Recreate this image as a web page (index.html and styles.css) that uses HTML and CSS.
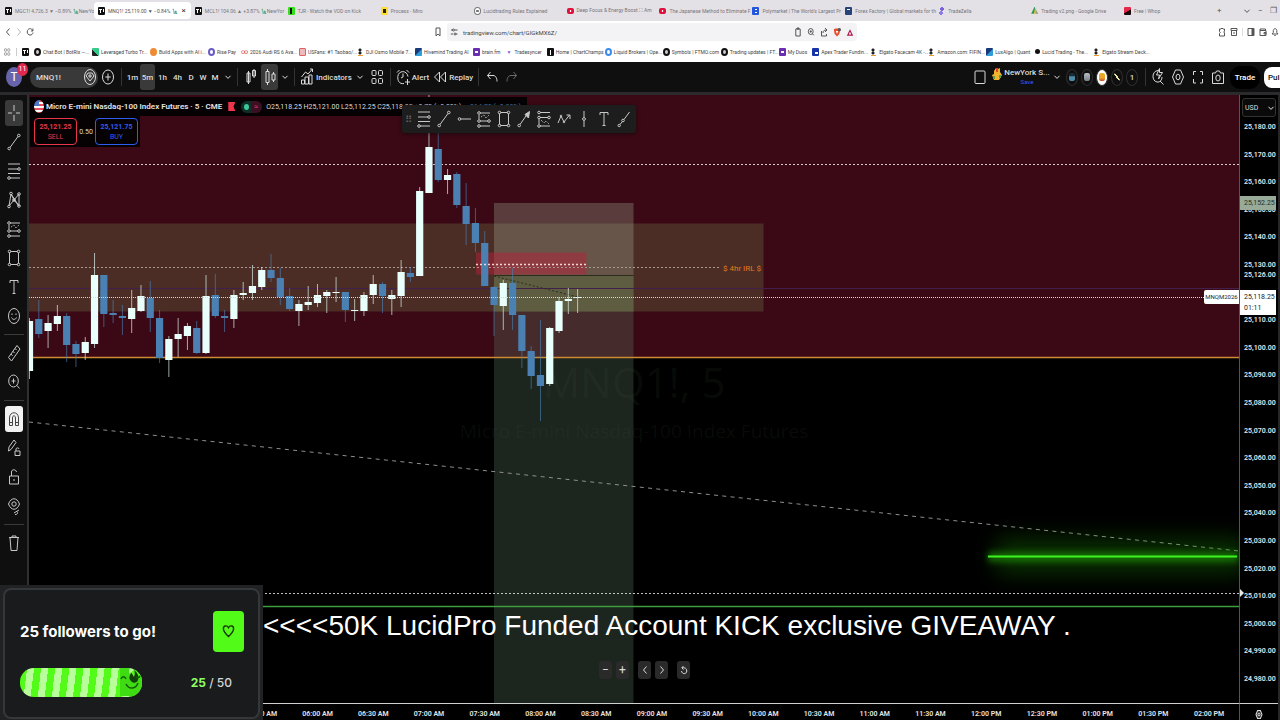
FILE: index.html
```html
<!DOCTYPE html>
<html lang="en">
<head>
    <meta charset="UTF-8">
    <meta name="viewport" content="width=device-width, initial-scale=1.0">
    <title>MNQ1! 25,119.00 ▼ −0.84% NewYork</title>
    <link rel="stylesheet" href="styles.css">
</head>
<body>
    <!-- icon set -->
    <svg class="sprite" aria-hidden="true">
        <symbol id="i-chevron" viewBox="0 0 8 8"><path d="M1.5 2.8 4 5.4 6.5 2.8"/></symbol>
        <symbol id="i-cross" viewBox="0 0 14 20"><path d="M7 2v6M7 12v6M1 10h4M9 10h4"/></symbol>
        <symbol id="i-line" viewBox="0 0 14 20"><path d="m3 15.500 8-11"/><circle cx="2.200" cy="16.500" r="1.300"/><circle cx="11.800" cy="3.500" r="1.300"/></symbol>
        <symbol id="i-fib" viewBox="0 0 14 20"><path d="M1 3h12M1 8h10M1 12.500h12M3 17h10"/><circle cx="12" cy="8" r="1.300"/><circle cx="2" cy="17" r="1.300"/></symbol>
        <symbol id="i-pattern" viewBox="0 0 14 20"><path d="M2 16 4 4l3 6 5-6M2 16l5-6 5 6L4 4M12 16V5"/><circle cx="2" cy="16.500" r="1.300"/><circle cx="4" cy="3.500" r="1.300"/><circle cx="12" cy="4" r="1.300"/><circle cx="12" cy="16" r="1.300"/><circle cx="7" cy="10" r="1.300"/></symbol>
        <symbol id="i-position" viewBox="0 0 14 20"><path d="M3 4h10M3 12h8M3 17h10M2 6v4" /><path d="m4 8 3-2 2 3 3-3" stroke-dasharray="1 1"/><circle cx="2" cy="4" r="1.300"/><circle cx="2" cy="12" r="1.300"/><circle cx="12" cy="12" r="1.300"/><circle cx="2" cy="17" r="1.300"/></symbol>
        <symbol id="i-short" viewBox="0 0 14 20"><path d="M3 3.500h10M3 8.500h8M3 17h10M2 10v5"/><path d="m4 11 3 3 2-2 3 3" stroke-dasharray="1 1"/><circle cx="2" cy="3.500" r="1.300"/><circle cx="2" cy="8.500" r="1.300"/><circle cx="12" cy="8.500" r="1.300"/><circle cx="2" cy="17" r="1.300"/></symbol>
        <symbol id="i-rect" viewBox="0 0 14 20"><path d="M2.500 4.500v11M11.500 4.500v11M3.500 3.500h7M3.500 16.500h7"/><circle cx="2.500" cy="3.500" r="1.300"/><circle cx="11.500" cy="3.500" r="1.300"/><circle cx="2.500" cy="16.500" r="1.300"/><circle cx="11.500" cy="16.500" r="1.300"/></symbol>
        <symbol id="i-text" viewBox="0 0 14 20"><path d="M3 6V3.500h8V6M7 3.500v13M5.500 16.500h3"/></symbol>
        <symbol id="i-smile" viewBox="0 0 14 20"><ellipse cx="7" cy="10" rx="5.500" ry="7.500"/><path d="M4.500 11.500c1 2.500 4 2.500 5 0M5 7.500v1.500M9 7.500v1.500"/></symbol>
        <symbol id="i-ruler" viewBox="0 0 14 20"><path d="M1.500 14.500 10 2.500l3 3.500-8.500 12zM4 11l1.500 1.700M6 8.300 7.500 10M8 5.500 9.500 7"/></symbol>
        <symbol id="i-zoomin" viewBox="0 0 14 20"><ellipse cx="6.500" cy="9" rx="4.800" ry="6"/><path d="m10 13.500 2.500 3M6.500 6.500v5M4.500 9h4"/></symbol>
        <symbol id="i-magnet" viewBox="0 0 14 20"><path d="M2.500 16.500V9c0-7 9-7 9 0v7.500h-3V9c0-3-3-3-3 0v7.500zM2.500 13.500h3M8.500 13.500h3"/></symbol>
        <symbol id="i-pencil" viewBox="0 0 14 20"><path d="m1.500 13 .5-4 5-7 2 2.500-5 7zM8 13h5v4.500H8zM9 13v-2c0-1.500 3-1.500 3 0"/></symbol>
        <symbol id="i-lock" viewBox="0 0 14 20"><path d="M2.500 9h9v8h-9zM4.500 9V5c0-3 4.500-3 5 0M7 12v2"/></symbol>
        <symbol id="i-hide" viewBox="0 0 14 20"><path d="M1.500 8c2.500-7 8.500-7 11 0-2.500 7-8.500 7-11 0z"/><circle cx="7" cy="8" r="2.200"/><path d="m7 17 5-3M8 18.500c3 0 3-2 2-3"/></symbol>
        <symbol id="i-trash" viewBox="0 0 14 20"><path d="M2 4.500h10M5 4.500V3h4v1.500M3 4.500l1 13h6l1-13"/></symbol>
        <symbol id="i-hline" viewBox="0 0 14 20"><path d="M4 10h10"/><circle cx="2.500" cy="10" r="1.300"/></symbol>
        <symbol id="i-arrow" viewBox="0 0 14 20"><path d="m3 15.500 7-10"/><path d="m12.500 2.500-4.500 3 3.500 3.500z" fill="currentColor"/><circle cx="2.200" cy="16.500" r="1.300"/></symbol>
        <symbol id="i-path" viewBox="0 0 14 20"><path d="m1 14 3-7 3 6 5.500-7M9.500 6h3.500v4"/><circle cx="4" cy="7" r=".8"/><circle cx="7" cy="13" r=".8"/></symbol>
        <symbol id="i-vline" viewBox="0 0 14 20"><path d="M7 2v6.500M7 11.500V18"/><circle cx="7" cy="10" r="1.400"/></symbol>
        <symbol id="i-ray" viewBox="0 0 14 20"><path d="m3 15.500 2-2.500M7 10.500 12.500 3"/><circle cx="2.200" cy="16.500" r="1.200"/><circle cx="6" cy="11.500" r="1.300"/></symbol>
        <symbol id="i-plus-circle" viewBox="0 0 14 20"><ellipse cx="7" cy="10" rx="5.500" ry="7"/><path d="M7 6.500v7M4.300 10h5.400"/></symbol>
        <symbol id="i-gem" viewBox="0 0 14 20"><ellipse cx="7" cy="10" rx="5.500" ry="7.500"/><path d="m3 9 2-3h4l2 3-4 5zM7 7v4M5 9h4"/></symbol>
        <symbol id="i-bars" viewBox="0 0 14 20"><path d="M4.500 4v13M3 6h3v9h-3zM10 2v9M8.500 3.500h3v5.500h-3z"/></symbol>
        <symbol id="i-candles" viewBox="0 0 14 20"><path d="M4.500 2v2.500M4.500 15.500V18M3 4.500h3v11H3zM10.500 5v2M10.500 13v2M9 7h3v6H9z"/></symbol>
        <symbol id="i-indicators" viewBox="0 0 14 20"><path d="M1.500 17v-4h3v4zM5 17v-7h3.500v7zM9 17V8h3v9zM1.500 10l4-5 2.500 2 4.500-5M10 2h2.500v3"/></symbol>
        <symbol id="i-grid" viewBox="0 0 14 20"><rect x="2" y="3.500" width="4" height="5" rx="1"/><rect x="8.500" y="3.500" width="4" height="5" rx="1"/><rect x="2" y="11.500" width="4" height="5" rx="1"/><rect x="8.500" y="11.500" width="4" height="5" rx="1"/></symbol>
        <symbol id="i-alarm" viewBox="0 0 14 20"><path d="M8 16.500C3 17.500 1.500 13 1.800 9.500 2.500 3 11 3 12 9.500M7 6.500V10l-2 1M1 5.500 3.500 3M10.500 3 13 5.500M11.500 12v6M9 15h5"/></symbol>
        <symbol id="i-replay" viewBox="0 0 14 20"><path d="m6.500 5-5 5 5 5zM12.500 5l-5 5 5 5z"/></symbol>
        <symbol id="i-undo" viewBox="0 0 14 20"><path d="M5.500 5 2.500 8.500l3 3.500M2.500 8.500H8c3 0 4 3 4 6"/></symbol>
        <symbol id="i-redo" viewBox="0 0 14 20"><path d="m8.500 5 3 3.500-3 3.500M11.500 8.500H6c-3 0-4 3-4 6"/></symbol>
        <symbol id="i-square" viewBox="0 0 14 20"><rect x="2" y="4" width="10" height="12.500" rx="1"/></symbol>
        <symbol id="i-quick" viewBox="0 0 14 20"><path d="M7 3.500C.5 4 .5 14 6 15c3 .5 5-2 5-5M9 14l3.500 3.500M8.500 1.500l-3 6.500h3L7.500 12l4-6.500h-3z"/></symbol>
        <symbol id="i-hex" viewBox="0 0 14 20"><path d="m4.500 3h5l3 7-3 7h-5l-3-7z"/><ellipse cx="7" cy="10" rx="2" ry="2.800"/></symbol>
        <symbol id="i-full" viewBox="0 0 14 20"><path d="M2.500 8V4.500H5M9 4.500h2.500V8M11.500 12v4H9M5 16H2.500v-4"/></symbol>
        <symbol id="i-camera" viewBox="0 0 14 20"><path d="M1.500 6h3L5.500 4h3l1 2h3v10.500h-11z"/><ellipse cx="7" cy="11" rx="2.200" ry="3"/></symbol>
        <symbol id="i-heart" viewBox="0 0 14 16"><path d="M7 14C3 10 1.500 8 1.500 5.500 1.500 2 5.500 1.500 7 4.500 8.500 1.500 12.500 2 12.500 5.500 12.500 8 11 10 7 14z"/></symbol>
        <symbol id="i-back" viewBox="0 0 8 10"><path d="M5.500 1.500 2.500 5l3 3.500"/></symbol>
        <symbol id="i-forward" viewBox="0 0 8 10"><path d="m2.500 1.500 3 3.500-3 3.500"/></symbol>
        <symbol id="i-reload" viewBox="0 0 8 10"><path d="M7 5.500C6.500 9 1.500 9 1.200 5 1.500 1 5.500.5 6.800 4M6.900 1.500V4H5"/></symbol>
        <symbol id="i-reset" viewBox="0 0 8 10"><path d="M1.500 6c.5 3.500 5 3.500 5.300 0C6.800 3 4.500 2.500 2 2.800M3.500 1 1.800 2.800l1.700 1.800"/></symbol>
        <symbol id="i-bookmark" viewBox="0 0 8 10"><path d="M2 1h4v8L4 7 2 9z"/></symbol>
        <symbol id="i-site" viewBox="0 0 8 10"><path d="M1 3h2M5 3h2.500M.8 7H3M6 7h1.500"/><circle cx="3.500" cy="3" r="1"/><circle cx="5" cy="7" r="1"/></symbol>
        <symbol id="i-clip" viewBox="0 0 8 10"><path d="M1.800 2h4.400v7H1.800zM3 1h2v1H3z"/></symbol>
        <symbol id="i-share" viewBox="0 0 8 10"><path d="M1.500 4v5h5V7M3 6c0-2 1-3 3.500-3M5 1l2 2-2 2"/></symbol>
        <symbol id="i-panel" viewBox="0 0 8 10"><path d="M1 1.500h6v7H1z"/><path d="M5 2h1.500v6H5z" fill="currentColor"/></symbol>
        <symbol id="i-archive" viewBox="0 0 8 10"><path d="M1 1.500h6v2H1zM1.500 3.500v5h5v-5M4 5v2"/></symbol>
        <symbol id="i-wallet" viewBox="0 0 8 10"><path d="M1 2h5.500v1.500M1 2v6.500h6v-5H1M5 5.500h2v1.500H5z"/></symbol>
        <symbol id="i-puzzle" viewBox="0 0 8 10"><path d="M1.500 2h1.500l1-1 1 1h1.500v2L5.800 5l.7 1v3h-5V6.500l.8-1-.8-1z"/></symbol>
        <symbol id="i-bell" viewBox="0 0 8 10"><path d="M1 7h6L5.800 5.500V3.500c-.5-2.500-3-2.500-3.500 0v2zM3.300 8.500h1.400"/></symbol>
    </svg>

    <header class="browser">
        <nav class="tabs" aria-label="Tabs">
            <a class="tab" href="#"><i class="fav fav-tv"></i><span>MGC1! 4,726.3 ▼ −0.89% 🗽NewYo</span></a>
            <a class="tab active" href="#"><i class="fav fav-tv"></i><span>MNQ1! 25,119.00 ▼ −0.84% 🗽</span><b>×</b></a>
            <a class="tab" href="#"><i class="fav fav-tv"></i><span>MCL1! 104.06 ▲ +3.87% 🗽NewYor</span></a>
            <a class="tab" href="#"><i class="fav fav-kick"></i><span>TJR - Watch the VOD on Kick</span></a>
            <a class="tab" href="#"><i class="fav fav-miro"></i><span>Process - Miro</span></a>
            <a class="tab" href="#"><i class="fav fav-ring"></i><span>Lucidtrading Rules Explained</span></a>
            <a class="tab" href="#"><i class="fav fav-yt"></i><span>Deep Focus &amp; Energy Boost ⛶ Am</span></a>
            <a class="tab" href="#"><i class="fav fav-yt"></i><span>The Japanese Method to Eliminate F</span></a>
            <a class="tab" href="#"><i class="fav fav-blue"></i><span>Polymarket | The World's Largest Pr</span></a>
            <a class="tab" href="#"><i class="fav fav-navy"></i><span>Forex Factory | Global markets for th</span></a>
            <a class="tab" href="#"><i class="fav fav-zella"></i><span>TradeZella</span></a>
            <a class="tab" href="#"><i class="fav fav-drive"></i><span>Trading v2.png - Google Drive</span></a>
            <a class="tab" href="#"><i class="fav fav-whop"></i><span>Free | Whop</span></a>
            <div class="window-controls"><span class="new-tab">+</span><svg class="ico-s"><use href="#i-chevron"/></svg><span>−</span><span>❐</span></div>
        </nav>

        <div class="url-row">
            <div class="nav-icons">
                <svg class="ico-s"><use href="#i-back"/></svg>
                <svg class="ico-s dim"><use href="#i-forward"/></svg>
                <svg class="ico-s"><use href="#i-reload"/></svg>
            </div>
            <svg class="ico-s"><use href="#i-bookmark"/></svg>
            <div class="url-box">
                <svg class="ico-s"><use href="#i-site"/></svg>
                <input type="text" aria-label="Address" value="tradingview.com/chart/GIGkMX6Z/">
                <svg class="ico-s"><use href="#i-clip"/></svg>
                <svg class="ico-s zoom"><use href="#i-zoomin"/></svg>
                <svg class="ico-s"><use href="#i-share"/></svg>
                <svg class="shield" viewBox="0 0 10 12"><path d="M1 2 3 1h4l2 1-1 6-3 3-3-3z" fill="#e8502b"/><path d="M3.500 4h3L5 8z" fill="#fff"/><circle cx="8" cy="2.500" r="2" fill="#555"/></svg>
                <svg class="shield" viewBox="0 0 10 12"><path d="M5 2 9 10H1z" fill="#b11652"/><path d="M5 5 6.500 8.500h-3z" fill="#fff"/></svg>
            </div>
            <div class="ext-icons">
                <svg class="ico-s"><use href="#i-puzzle"/></svg>
                <svg class="ico-s"><use href="#i-archive"/></svg>
                <i></i>
                <svg class="ico-s"><use href="#i-panel"/></svg>
                <svg class="ico-s"><use href="#i-wallet"/></svg>
                <svg class="ico-s"><use href="#i-bell"/></svg>
            </div>
        </div>

        <nav class="bookmarks" aria-label="Bookmarks">
            <svg class="ico-s"><use href="#i-grid"/></svg>
            <i class="sep"></i>
            <a href="#" aria-label="TradingView"><i class="fav fav-tv"></i></a>
            <a class="long" href="#"><i class="fav fav-dark"></i>Chat Bot | BotRix —...</a>
            <a class="long" href="#"><i class="fav fav-green"></i>Leveraged Turbo Tr...</a>
            <a class="long" href="#"><i class="fav fav-orange"></i>Build Apps with AI i...</a>
            <a href="#"><i class="fav fav-violet"></i>Rise Pay</a>
            <a class="long" href="#"><i class="fav fav-audi">∞</i>2026 Audi RS 6 Ava...</a>
            <a class="long" href="#"><i class="fav fav-us"></i>USFans: #1 Taobao/...</a>
            <a class="long" href="#"><i class="fav fav-amz"></i>DJI Osmo Mobile 7...</a>
            <a class="long" href="#"><i class="fav fav-hive"></i>Hivemind Trading AI</a>
            <a href="#"><i class="fav fav-purple"></i>brain.fm</a>
            <a href="#"><i class="fav fav-sync">▼</i>Tradesyncer</a>
            <a class="long" href="#"><i class="fav fav-black"></i>Home | ChartChamps</a>
            <a class="long" href="#"><i class="fav fav-drop"></i>Liquid Brokers | Ope...</a>
            <a class="long" href="#"><i class="fav fav-ftmo"></i>Symbols | FTMO.com</a>
            <a class="long" href="#"><i class="fav fav-ftmo"></i>Trading updates | FT...</a>
            <a href="#"><i class="fav fav-purple"></i>My Duos</a>
            <a class="long" href="#"><i class="fav fav-apex"></i>Apex Trader Fundin...</a>
            <a class="long" href="#"><i class="fav fav-amz"></i>Elgato Facecam 4K -...</a>
            <a class="long" href="#"><i class="fav fav-amz"></i>Amazon.com: FIFIN...</a>
            <a href="#"><i class="fav fav-hive"></i>LuxAlgo | Quant</a>
            <a class="long" href="#"><i class="fav fav-dot"></i>Lucid Trading - The...</a>
            <a class="long" href="#"><i class="fav fav-amz"></i>Elgato Stream Deck...</a>
        </nav>
    </header>

    <div class="toolbar">
        <div class="avatar">T<span class="badge">11</span></div>
        <button class="symbol">MNQ1!<svg class="ico"><use href="#i-gem"/></svg></button>
        <button class="icon-btn wide" aria-label="Compare"><svg class="ico"><use href="#i-plus-circle"/></svg></button>
        <i class="divider"></i>
        <button class="interval">1m</button>
        <button class="interval active">5m</button>
        <button class="interval">1h</button>
        <button class="interval">4h</button>
        <button class="interval day">D</button>
        <button class="interval day">W</button>
        <button class="interval day">M</button>
        <button class="more" aria-label="More intervals"><svg class="ico-s"><use href="#i-chevron"/></svg></button>
        <i class="divider"></i>
        <button class="icon-btn wide" aria-label="Bar style"><svg class="ico"><use href="#i-bars"/></svg></button>
        <button class="icon-btn active" aria-label="Candles"><svg class="ico"><use href="#i-candles"/></svg></button>
        <button class="more" aria-label="Chart styles"><svg class="ico-s"><use href="#i-chevron"/></svg></button>
        <i class="divider"></i>
        <button class="label-btn"><svg class="ico"><use href="#i-indicators"/></svg>Indicators</button>
        <button class="more" aria-label="Favourites"><svg class="ico-s"><use href="#i-chevron"/></svg></button>
        <button class="icon-btn wide" aria-label="Templates"><svg class="ico"><use href="#i-grid"/></svg></button>
        <i class="divider"></i>
        <button class="label-btn"><svg class="ico"><use href="#i-alarm"/></svg>Alert</button>
        <button class="label-btn"><svg class="ico"><use href="#i-replay"/></svg>Replay</button>
        <i class="divider"></i>
        <button class="icon-btn wide" aria-label="Undo"><svg class="ico"><use href="#i-undo"/></svg></button>
        <button class="icon-btn wide dim" aria-label="Redo"><svg class="ico"><use href="#i-redo"/></svg></button>

        <div class="toolbar-right">
            <button class="icon-btn" aria-label="Layout"><svg class="ico"><use href="#i-square"/></svg></button>
            <svg class="liberty" viewBox="0 0 10 14"><path d="M2 4 4 1l2 1 2-1v4l2 3-3 5H2L0 8l2-1z" fill="#f2b32c"/><path d="M4 1h2v4H4z" fill="#e2452e"/><path d="M1 9h2v3H1zM7 8h2v3H7z" fill="#5b9e49"/></svg>
            <button class="layout-name">NewYork S...<span>Save</span></button>
            <button class="more" aria-label="Layouts"><svg class="ico-s"><use href="#i-chevron"/></svg></button>
            <button class="chip" aria-label="Layout 1"><i class="c-teal"></i></button>
            <button class="chip" aria-label="Layout 2"><i class="c-gray"></i></button>
            <button class="chip white" aria-label="Layout 3"><i class="c-gold"></i></button>
            <button class="chip" aria-label="Layout 4"><i class="c-bone"></i></button>
            <button class="chip">1</button>
            <i class="divider wide"></i>
            <button class="icon-btn wide" aria-label="Quick search"><svg class="ico"><use href="#i-quick"/></svg></button>
            <button class="icon-btn wide" aria-label="Settings"><svg class="ico"><use href="#i-hex"/></svg></button>
            <button class="icon-btn wide" aria-label="Fullscreen"><svg class="ico"><use href="#i-full"/></svg></button>
            <button class="icon-btn wide" aria-label="Snapshot"><svg class="ico"><use href="#i-camera"/></svg></button>
            <button class="trade">Trade</button>
            <button class="publish">Pul</button>
        </div>
    </div>

    <main class="workspace">
        <aside class="sidebar">
            <button class="active" aria-label="Cross"><svg class="ico"><use href="#i-cross"/></svg></button>
            <button aria-label="Trend line"><svg class="ico"><use href="#i-line"/></svg></button>
            <button aria-label="Fib retracement"><svg class="ico"><use href="#i-fib"/></svg></button>
            <button aria-label="Patterns"><svg class="ico"><use href="#i-pattern"/></svg></button>
            <button aria-label="Position"><svg class="ico"><use href="#i-position"/></svg></button>
            <button aria-label="Rectangle"><svg class="ico"><use href="#i-rect"/></svg></button>
            <button aria-label="Text"><svg class="ico"><use href="#i-text"/></svg></button>
            <button aria-label="Emoji"><svg class="ico"><use href="#i-smile"/></svg></button>
            <hr>
            <button aria-label="Measure"><svg class="ico"><use href="#i-ruler"/></svg></button>
            <button aria-label="Zoom in"><svg class="ico"><use href="#i-zoomin"/></svg></button>
            <hr>
            <button class="on" aria-label="Magnet"><svg class="ico"><use href="#i-magnet"/></svg></button>
            <button aria-label="Stay in drawing mode"><svg class="ico"><use href="#i-pencil"/></svg></button>
            <button aria-label="Lock"><svg class="ico"><use href="#i-lock"/></svg></button>
            <button aria-label="Hide"><svg class="ico"><use href="#i-hide"/></svg></button>
            <hr>
            <button aria-label="Remove"><svg class="ico"><use href="#i-trash"/></svg></button>
        </aside>

        <div class="chart-grid">
            <section class="chart">
                <svg class="plot" viewBox="29 95 1210 608" preserveAspectRatio="xMinYMin slice">
                    <rect x="29" y="95" width="1210" height="263" fill="#3b0915"/>
                    <rect x="29" y="223.500" width="734.500" height="88" fill="#4c2d26"/>
                    <!-- position tool -->
                    <rect x="494" y="203" width="139.500" height="73" fill="rgba(162,179,152,.3)"/>
                    <rect x="494" y="276" width="139.500" height="427" fill="rgba(93,123,100,.3)"/>
                    <rect x="494" y="276" width="139.500" height="35.500" fill="#5e5c41"/>
                    <rect x="476" y="252.500" width="110.500" height="22" fill="rgba(190,30,60,.45)"/>
                    <text class="watermark" x="634" y="398" font-size="42">MNQ1!, 5</text>
                    <text class="watermark" x="634" y="438" font-size="19">Micro E-mini Nasdaq-100 Index Futures</text>

                    <g fill="none">
                        <path d="M29 164.500H1239" stroke="#d8c9cd" stroke-dasharray="2 2"/>
                        <path d="M29 267.500H720" stroke="#a89995" stroke-dasharray="2 2"/>
                        <path d="M29 288.500H1239" stroke="#41204c"/>
                        <path d="M29 357.500H1239" stroke="#cd8b35" stroke-width="1.500"/>
                        <path d="M494 275.500H633.500" stroke="#2b2c1c"/>
                        <path d="m494 276 84 21" stroke="#26301c" stroke-dasharray="2 2"/>
                        <path d="m29 422 1210 129" stroke="#8f8f8f" stroke-dasharray="4 4.300"/>
                        <path d="M29 593.500H1239" stroke="#c4c4c4" stroke-dasharray="2 2"/>
                        <path d="M29 606.500H1239" stroke="#3f9c3f" stroke-width="1.300"/>
                    </g>
                    <!-- glowing level -->
                    <rect class="glow-wide" x="996" y="538" width="250" height="36" fill="#1f9a08" opacity=".3"/>
                    <rect class="glow" x="988" y="552" width="250" height="10" fill="#1f9a08" opacity=".6"/>
                    <path d="M988 556.500H1237" stroke="#3df51e" stroke-width="2"/>
                    <g id="candles"></g>
                    <path d="M476 264.500H587" stroke="#f0d5d5" stroke-width="1.300" stroke-dasharray="2 2"/>
                    <path d="M29 297.500H1204" stroke="#e3d6d0" stroke-dasharray="1 1"/>
                    <text x="723" y="271" font-size="8" fill="#e57a1d">$ 4hr IRL $</text>
                </svg>

                <div class="legend">
                    <i class="flag"></i>
                    <h1>Micro E-mini Nasdaq-100 Index Futures · 5 · CME</h1>
                    <i class="ribbon"></i>
                    <span class="status"><i></i>≈</span>
                    <p>O25,118.25 H25,121.00 L25,112.25 C25,118.25 +0.75 (+0.00%) <em>−214.75 (−0.85%)</em></p>
                </div>
                <div class="order">
                    <button class="sell"><b>25,121.25</b>SELL</button>
                    <span>0.50</span>
                    <button class="buy"><b>25,121.75</b>BUY</button>
                </div>

                <div class="draw-bar">
                    <span class="grip">⠿</span>
                    <button aria-label="Fib retracement"><svg class="ico"><use href="#i-fib"/></svg></button>
                    <button aria-label="Trend line"><svg class="ico"><use href="#i-line"/></svg></button>
                    <button aria-label="Horizontal ray"><svg class="ico"><use href="#i-hline"/></svg></button>
                    <button aria-label="Long position"><svg class="ico"><use href="#i-position"/></svg></button>
                    <button aria-label="Rectangle"><svg class="ico"><use href="#i-rect"/></svg></button>
                    <button aria-label="Arrow"><svg class="ico"><use href="#i-arrow"/></svg></button>
                    <button aria-label="Short position"><svg class="ico"><use href="#i-short"/></svg></button>
                    <button aria-label="Path"><svg class="ico"><use href="#i-path"/></svg></button>
                    <button aria-label="Vertical line"><svg class="ico"><use href="#i-vline"/></svg></button>
                    <button aria-label="Text"><svg class="ico"><use href="#i-text"/></svg></button>
                    <button aria-label="Ray"><svg class="ico"><use href="#i-ray"/></svg></button>
                </div>

                <span class="contract">MNQM2026</span>
                <p class="banner">&lt;&lt;&lt;&lt;50K LucidPro Funded Account KICK exclusive GIVEAWAY .</p>

                <div class="chart-nav">
                    <button aria-label="Zoom out">−</button>
                    <button aria-label="Zoom in">+</button>
                    <button class="gap" aria-label="Scroll left"><svg class="ico-s"><use href="#i-back"/></svg></button>
                    <button aria-label="Scroll right"><svg class="ico-s"><use href="#i-forward"/></svg></button>
                    <button class="gap" aria-label="Reset"><svg class="ico-s"><use href="#i-reset"/></svg></button>
                </div>
            </section>

            <section class="price-axis">
                <div class="currency">
                    <select aria-label="Currency"><option>USD</option></select>
                    <svg class="ico-s"><use href="#i-chevron"/></svg>
                </div>
                <ol id="prices"></ol>
                <span class="tag tag-green">25,152.25</span>
                <span class="tag tag-plain">25,126.00</span>
                <span class="tag tag-last">25,118.25<br>01:11</span>
                <i class="marker"></i>
            </section>

            <ol class="time-axis" id="times"></ol>
            <button class="axis-settings" aria-label="Axis settings"><svg class="ico" viewBox="0 0 14 20"><use href="#i-hex"/></svg></button>
        </div>
    </main>

    <section class="goal">
        <div class="goal-card">
            <h2>25 followers to go!</h2>
            <button class="heart" aria-label="Follow"><svg viewBox="0 0 14 16"><use href="#i-heart"/></svg></button>
            <div class="bar" role="progressbar" aria-label="Followers" aria-valuenow="25" aria-valuemax="50">
                <svg viewBox="0 0 22 28"><path d="M0 0h10c-2 4 0 7 3 8 4 0 6-1 9-2v22H0z" fill="#3fdc14"/><path d="M11 13c-3-3-1-5 0-9 1 2 2 3 3 5 1-2 1-5 0-7 4 3 5 6 4 10-1 3-5 4-7 1z" fill="#123f0a"/><path d="M1 11c1-3 4-3 5 0M6 16c3 6 10 5 12-1M16 9c2 1 3 1 4-1" fill="none" stroke="#145c0a" stroke-width="1.500"/></svg>
            </div>
            <p><b>25</b> / 50</p>
        </div>
    </section>

    <script src="chart.js"></script>
</body>
</html>
```
FILE: styles.css
```css
* {
    box-sizing: border-box;
}
body {
    margin: 0;
    min-height: 100vh;
    display: flex;
    flex-direction: column;
    position: relative;
    overflow: hidden;
    background-color: #000;
    color: #dbdbdb;
    font-family: Roboto, 'Liberation Sans', Arial, sans-serif;
    font-size: 7px;
}
button {
    font-family: inherit;
    color: inherit;
    background: none;
    border: none;
    padding: 0;
    display: flex;
    align-items: center;
    justify-content: center;
    flex-shrink: 0;
}
h1, h2, p, ol {
    margin: 0;
    padding: 0;
    list-style: none;
}
.sprite {
    display: none;
}
.ico, .ico-s {
    fill: none;
    stroke: currentColor;
    stroke-width: 1;
    flex-shrink: 0;
}
.ico {
    width: 14px;
    height: 20px;
}
.ico-s {
    width: 8px;
    height: 10px;
}
.dim {
    opacity: .45;
}

/* browser */
.browser {
    background-color: #fff;
    color: #555;
    height: 62px;
    flex-shrink: 0;
}
.tabs {
    display: flex;
    height: 21px;
    padding: 2px 0 2px 1px;
    background-color: #e3e1e6;
}
.tab {
    flex: 1 1 0;
    min-width: 0;
    display: flex;
    align-items: center;
    gap: 3px;
    padding: 0 1px 0 4px;
    font-size: 5px;
    color: #77757c;
    text-decoration: none;
    white-space: nowrap;
    border-radius: 4px;
}
.tab span {
    flex: 1;
}
.tab.active {
    background-color: #fff;
    color: #555;
    padding-right: 5px;
}
.tab b {
    font-weight: normal;
    font-size: 8px;
    color: #333;
}
.window-controls {
    width: 67px;
    display: flex;
    align-items: center;
    gap: 7px;
    padding-left: 4px;
    font-size: 8px;
}
.new-tab {
    width: 19px;
}
.fav {
    width: 7px;
    height: 8px;
    border-radius: 1px;
    flex-shrink: 0;
    font-style: normal;
    line-height: 8px;
    font-size: 7px;
    text-align: center;
}
.fav-tv {
    background: linear-gradient(#fff, #fff) 1px 2px / 3px 1px no-repeat, linear-gradient(#fff, #fff) 2px 2px / 1px 4px no-repeat, linear-gradient(#fff, #fff) 5px 2px / 1px 3px no-repeat, #111;
}
.fav-kick { background: linear-gradient(#111, #111) 2px 1px / 2px 6px no-repeat, #35e01c; }
.fav-miro { background: linear-gradient(#222, #222) 2px 2px / 3px 4px no-repeat, #ffdd33; }
.fav-ring { border: 1px solid #777; border-radius: 50%; background: radial-gradient(#777 30%, #fff 35%); }
.fav-yt { height: 6px; border-radius: 2px; background: radial-gradient(#fff 18%, #e00f3c 24%); }
.fav-blue { background: linear-gradient(#fff, #fff) 3px 2px / 2px 1px no-repeat, linear-gradient(#fff, #fff) 3px 5px / 2px 1px no-repeat, #2455dd; }
.fav-navy { background: linear-gradient(#fff, #fff) 2px 2px / 3px 1px no-repeat, #27437c; }
.fav-zella { background: radial-gradient(circle at 4px 2px, #7a63d8 2px, transparent 2px), radial-gradient(circle at 3px 6px, #8f7ae5 2px, transparent 2px); }
.fav-drive { clip-path: polygon(50% 0, 100% 90%, 0 90%); background: linear-gradient(100deg, #2a9a54 45%, #f3c02c 55%, #3f7fe8); }
.fav-whop { background: linear-gradient(150deg, #e6264a 50%, #160a0c 55%); }
.fav-dark, .fav-ftmo { border: 2px solid #111; border-radius: 50%; background-color: #ccc; }
.fav-green { background: linear-gradient(45deg, #222 40%, #35c98b 45%); }
.fav-orange { border-radius: 50%; background-color: #ef8a35; }
.fav-violet { border: 2px solid #6a5bc4; border-radius: 50%; }
.fav-audi { color: #d33; }
.fav-us { border: 1px solid #d7636a; background-color: #f2b9bb; }
.fav-amz { background: radial-gradient(circle at 3px 2px, #222 1px, transparent 2px), radial-gradient(circle at 3px 5px, #222 1px, transparent 2px), linear-gradient(#f0992c, #f0992c) 1px 7px / 5px 1px no-repeat; }
.fav-hive { background: linear-gradient(135deg, #163b78 50%, #2f9bd8 55%); }
.fav-purple { background: linear-gradient(#fff, #fff) 2px 3px / 3px 2px no-repeat, #6a2fb0; }
.fav-sync { color: #7a5be0; font-size: 5px; }
.fav-black { background: linear-gradient(#fff, #fff) 3px 2px / 1px 5px no-repeat, #111; }
.fav-drop { border: 2px solid #3d8bea; border-radius: 50%; }
.fav-apex { background: linear-gradient(#fff, #fff) 3px 4px / 3px 2px no-repeat, #1735a8; }
.fav-dot { width: 5px; height: 5px; border-radius: 50%; background-color: #111; }

.url-row {
    display: flex;
    align-items: center;
    height: 22px;
}
.nav-icons {
    display: flex;
    gap: 3px;
    width: 434px;
    padding-left: 4px;
}
.url-box {
    display: flex;
    align-items: center;
    gap: 5px;
    width: 410px;
    height: 18px;
    margin-left: 5px;
    padding: 0 3px;
    border-radius: 4px;
    background-color: #f3f2f5;
}
.url-box input {
    flex: 1;
    border: none;
    padding: 0;
    background: none;
    font-family: inherit;
    font-size: 6px;
    color: #444;
}
.zoom {
    stroke-width: 2;
}
.shield {
    width: 8px;
    height: 11px;
}
.ext-icons {
    display: flex;
    align-items: center;
    gap: 4px;
    margin-left: auto;
    padding-right: 1px;
}
.ext-icons i {
    width: 1px;
    height: 8px;
    background-color: #ddd;
}
.bookmarks {
    display: flex;
    align-items: center;
    height: 17px;
    padding-left: 3px;
    gap: 5px;
}
.bookmarks .sep {
    width: 1px;
    height: 8px;
    background-color: #ccc;
}
.bookmarks a {
    display: flex;
    align-items: center;
    gap: 2px;
    font-size: 5px;
    color: #444;
    text-decoration: none;
    white-space: nowrap;
}
.bookmarks a.long {
    width: 53px;
}

/* top toolbar */
.toolbar {
    display: flex;
    align-items: center;
    height: 33px;
    flex-shrink: 0;
    padding-left: 6px;
    background-color: #0f0f0f;
    border-bottom: 3px solid #2b2b2d;
    font-size: 8px;
}
.toolbar button {
    font-size: 8px;
    font-weight: 500;
}
.avatar {
    position: relative;
    width: 16px;
    height: 20px;
    margin-right: 8px;
    border-radius: 50%;
    background-color: #6864ab;
    color: #fff;
    font-size: 12px;
    line-height: 20px;
    text-align: center;
}
.badge {
    position: absolute;
    top: -4px;
    left: 11px;
    width: 11px;
    height: 13px;
    border-radius: 50%;
    background-color: #e0274d;
    font-size: 7px;
    line-height: 13px;
}
.symbol {
    justify-content: space-between;
    width: 68px;
    height: 21px;
    padding: 0 1px 0 6px;
    border-radius: 10px;
    background-color: #393939;
}
.divider {
    width: 1px;
    height: 18px;
    margin: 0 3px;
    background-color: #333;
    flex-shrink: 0;
}
.divider.wide {
    margin: 0 2px 0 7px;
}
.interval {
    width: 15px;
    height: 26px;
    border-radius: 3px;
}
.interval.day {
    width: 12px;
}
.active.interval, .active.icon-btn {
    background-color: #3a3a3a;
}
.more {
    width: 13px;
    height: 20px;
}
.icon-btn {
    width: 17px;
    height: 26px;
    border-radius: 3px;
}
.icon-btn.wide {
    width: 20px;
}
.label-btn {
    gap: 2px;
    height: 26px;
    padding: 0 2px;
}
.toolbar-right {
    display: flex;
    align-items: center;
    margin-left: auto;
}
.liberty {
    width: 10px;
    height: 14px;
    margin: 0 2px 6px 4px;
}
.layout-name {
    flex-direction: column;
    line-height: 10px;
    width: 46px;
    white-space: nowrap;
}
.layout-name span {
    font-size: 6px;
    font-weight: normal;
    line-height: 8px;
    color: #3a58f0;
}
.chip {
    width: 12px;
    height: 17px;
    margin-left: 3px;
    border: 1px solid #2e2e2e;
    border-radius: 50%;
}
.chip.white {
    background-color: #fff;
}
.chip i {
    width: 6px;
    height: 8px;
    border-radius: 2px;
}
.c-teal { background: linear-gradient(#1b2b33 40%, #4c8ca8 45%); }
.c-gray { background: linear-gradient(#b8bec6, #7a8087); }
.c-gold { background: linear-gradient(#e8a72a 60%, #c54a2a); }
.c-bone { background: linear-gradient(50deg, transparent 42%, #f0e6a8 42%, #f0e6a8 58%, transparent 58%); }
.trade {
    width: 30px;
    height: 23px;
    margin-left: 2px;
    border-radius: 10px;
    background-color: #000;
    color: #fff;
}
.publish {
    width: 16px;
    height: 21px;
    margin-left: 4px;
    padding-left: 4px;
    justify-content: flex-start;
    border-radius: 8px 0 0 8px;
    background-color: #fff;
    color: #111;
}

/* workspace */
.workspace {
    flex: 1;
    display: flex;
    min-height: 0;
}
.sidebar {
    display: flex;
    flex-direction: column;
    align-items: center;
    gap: 3px;
    width: 29px;
    padding-top: 5px;
    flex-shrink: 0;
    background-color: #0f0f0f;
    border-right: 2px solid #303030;
    color: #c8c8c8;
}
.sidebar button {
    width: 18px;
    height: 26px;
    border-radius: 3px;
}
.sidebar .active {
    background-color: #3a3a3a;
}
.sidebar .on {
    background-color: #f2f2f2;
    color: #444;
}
.sidebar hr {
    width: 20px;
    height: 1px;
    margin: 2px 0;
    border: none;
    background-color: #3a3a3a;
}
.chart-grid {
    flex: 1;
    display: grid;
    grid-template-columns: 1fr 39px;
    grid-template-rows: 1fr 17px;
    min-width: 0;
    border-right: 2px solid #262628;
}
.chart {
    position: relative;
    min-height: 0;
    overflow: hidden;
}
.plot {
    position: absolute;
    width: 100%;
    height: 100%;
}
.glow {
    filter: blur(3px);
}
.glow-wide {
    filter: blur(11px);
}
.watermark {
    text-anchor: middle;
    font-family: 'Open Sans', sans-serif;
    fill: rgba(90, 110, 80, .11);
}
.up { fill: #e8fffb; }
.down { fill: #4a80b2; }
.legend {
    position: absolute;
    top: 2px;
    left: 1px;
    width: 497px;
    height: 19px;
    display: flex;
    align-items: center;
    padding-left: 4px;
    background-color: #060203;
    white-space: nowrap;
}
.legend i, .legend .status {
    flex-shrink: 0;
}
.legend h1 {
    margin: 0 6px 0 2px;
    font-size: 8px;
    font-weight: 600;
    color: #e4e4e4;
}
.legend p {
    margin-left: 4px;
}
.legend em {
    font-style: normal;
    color: #4a80b2;
    margin-left: 3px;
}
.flag {
    width: 10px;
    height: 13px;
    border-radius: 50%;
    background: linear-gradient(#4d78c9, #4d78c9) 0 0 / 5px 6px no-repeat, repeating-linear-gradient(#e9505c 0 2px, #fff 2px 4px);
}
.ribbon {
    width: 7px;
    height: 9px;
    background-color: #f0354a;
    clip-path: polygon(0 0, 100% 0, 75% 50%, 100% 100%, 0 100%);
}
.status {
    display: flex;
    align-items: center;
    gap: 5px;
    margin-left: 6px;
    padding: 0 3px;
    width: 21px;
    height: 12px;
    border-radius: 6px;
    background: linear-gradient(90deg, #0e2f26 50%, #3c0f22 50%);
    color: #f0386b;
}
.status i {
    width: 5px;
    height: 6px;
    border-radius: 50%;
    background-color: #3fc69a;
}
.order {
    position: absolute;
    top: 21px;
    left: 1px;
    display: flex;
    align-items: center;
    justify-content: space-between;
    width: 110px;
    height: 31px;
    padding: 0 2px 0 4px;
    background-color: #060203;
}
.order button {
    flex-direction: column;
    width: 43px;
    height: 27px;
    border: 1px solid;
    border-radius: 4px;
    font-size: 7px;
    line-height: 10px;
}
.sell {
    color: #e8354a;
    border-color: #a32339;
}
.buy {
    color: #2f5cf0;
    border-color: #2348b5;
}
.draw-bar {
    position: absolute;
    top: 10px;
    left: 373px;
    display: flex;
    align-items: center;
    width: 234px;
    height: 28px;
    border-radius: 3px;
    background-color: #1d1d1e;
    box-shadow: 0 1px 4px rgba(0, 0, 0, .5);
    color: #c8c8c8;
}
.draw-bar button {
    width: 20px;
}
.grip {
    width: 12px;
    text-align: center;
    color: #666;
    font-size: 10px;
}
.contract {
    position: absolute;
    top: 195px;
    right: 0;
    width: 35px;
    height: 14px;
    border-radius: 2px 0 0 2px;
    background-color: #fff;
    color: #222;
    font-size: 6px;
    line-height: 14px;
    text-align: center;
}
.banner {
    position: absolute;
    left: 234px;
    top: 512px;
    color: #fff;
    font-family: 'Liberation Sans', Arial, sans-serif;
    font-size: 28px;
    line-height: 38px;
    white-space: nowrap;
}
.chart-nav {
    position: absolute;
    left: 570px;
    bottom: 24px;
    display: flex;
    gap: 4px;
}
.chart-nav button {
    width: 13px;
    height: 18px;
    border-radius: 3px;
    background-color: #2a2a2b;
    font-size: 12px;
}
.chart-nav .gap {
    margin-left: 5px;
}

/* axes */
.price-axis {
    position: relative;
    display: flex;
    flex-direction: column;
    padding-top: 3px;
    border-left: 1px solid #555;
    color: #e6e6e6;
    font-weight: 600;
}
.currency {
    position: relative;
    width: 34px;
    height: 19px;
    margin-left: 2px;
}
.currency select {
    appearance: none;
    width: 100%;
    height: 100%;
    padding: 0 2px;
    border: 1px solid #333;
    border-radius: 3px;
    background-color: #0a0a0a;
    color: #ddd;
    font-family: inherit;
    font-size: 7px;
}
.currency svg {
    position: absolute;
    right: 1px;
    top: 5px;
    pointer-events: none;
}
#prices {
    flex: 1;
    display: flex;
    flex-direction: column;
    justify-content: space-between;
    padding: 5px 0 19px 4px;
}
#prices li {
    line-height: 10px;
}
.tag {
    position: absolute;
    left: 0;
    width: 36px;
    padding-left: 4px;
    line-height: 11px;
}
.tag-green {
    top: 101px;
    height: 14px;
    line-height: 14px;
    background-color: #98aa98;
    color: #233023;
    font-weight: normal;
}
.tag-plain {
    top: 175px;
    background-color: #000;
}
.tag-last {
    top: 195px;
    height: 25px;
    padding-top: 2px;
    background-color: #fff;
    color: #222;
    font-weight: normal;
}
.marker {
    position: absolute;
    left: 0;
    top: 494px;
    border: 4px solid transparent;
    border-left-color: #e8e8e8;
    border-right-width: 0;
}
.time-axis {
    display: flex;
    align-items: center;
    padding: 4px 2px 0 205px;
    border-top: 1px solid #d0d0d0;
    color: #e6e6e6;
    font-weight: 600;
}
.time-axis li {
    flex: 1;
    text-align: center;
    white-space: nowrap;
}
.axis-settings {
    padding-top: 4px;
    border-top: 1px solid #d0d0d0;
    border-left: 1px solid #555;
}
.axis-settings .ico {
    width: 8px;
    height: 11px;
    stroke-width: 2;
}

/* follower goal */
.goal {
    position: absolute;
    left: 0;
    bottom: 0;
    width: 263px;
    height: 135px;
    padding: 3px 3px 0;
    background-color: #202224;
}
.goal-card {
    height: 131px;
    display: grid;
    grid-template-columns: 1fr auto;
    align-content: center;
    align-items: center;
    row-gap: 16px;
    padding: 0 14px 0 15px;
    border: 2px solid #35383b;
    border-radius: 8px;
    background-color: #191b1d;
    font-family: Inter, sans-serif;
}
.goal h2 {
    font-size: 15px;
    color: #fff;
}
.heart {
    justify-self: end;
    width: 31px;
    height: 41px;
    border-radius: 4px;
    background-color: #53fc18;
    color: #14380a;
}
.heart svg {
    width: 13px;
    height: 16px;
    fill: none;
    stroke: currentColor;
    stroke-width: 1.5;
}
.bar {
    width: 122px;
    height: 29px;
    border-radius: 14px;
    display: flex;
    justify-content: flex-end;
    overflow: hidden;
    background: repeating-linear-gradient(97deg, #53fc18 0 7px, #b8ff9c 7px 14px);
}
.bar svg {
    width: 22px;
    height: 28px;
}
.goal p {
    padding-right: 12px;
    font-size: 12px;
    font-weight: 500;
    color: #d6d6d6;
}
.goal p b {
    color: #8dff63;
}
```
FILE: chart.js
```js
// [up, high, bodyTop, bodyBottom, low]
const candles = [
    [1, 318, 321, 371, 379], [0, 300, 319, 334, 338], [1, 315, 323, 331, 348], [1, 305, 316, 324, 331],
    [0, 313, 316, 345, 362], [0, 341, 344, 354, 367], [1, 337, 342, 353, 360], [1, 253, 275, 344, 348],
    [0, 275, 275, 314, 327], [0, 300, 313, 315, 323], [0, 305, 316, 318, 335], [1, 290, 308, 319, 333],
    [1, 285, 296, 311, 312], [0, 281, 298, 318, 332], [0, 310, 318, 358, 363], [1, 336, 339, 360, 377],
    [1, 318, 334, 339, 357], [1, 323, 326, 336, 350], [0, 321, 328, 353, 354], [1, 275, 296, 353, 354],
    [0, 274, 295, 316, 318], [0, 310, 316, 318, 332], [1, 290, 295, 319, 328], [1, 282, 293, 295, 300],
    [1, 265, 286, 293, 300], [1, 267, 270, 287, 290], [0, 254, 270, 278, 282], [0, 268, 278, 297, 305],
    [0, 288, 296, 309, 311], [1, 300, 304, 311, 326], [1, 286, 302, 305, 310], [1, 284, 295, 303, 307],
    [1, 290, 292, 296, 313], [1, 277, 292, 293, 302], [0, 292, 292, 310, 322], [1, 299, 310, 311, 321],
    [1, 292, 295, 311, 316], [1, 275, 284, 295, 304], [0, 282, 284, 296, 313], [1, 290, 295, 299, 315],
    [1, 260, 272, 296, 307], [0, 267, 273, 277, 282], [1, 187, 191, 276, 276], [1, 94, 147, 193, 193],
    [0, 133, 149, 180, 182], [1, 169, 175, 180, 194], [0, 172, 174, 205, 208], [0, 183, 206, 224, 245],
    [0, 208, 223, 243, 252], [0, 231, 243, 286, 286], [0, 286, 287, 305, 336], [1, 280, 283, 306, 330],
    [0, 268, 283, 315, 330], [0, 315, 315, 351, 368], [0, 346, 351, 376, 389], [0, 320, 375, 386, 421],
    [1, 327, 328, 384, 386], [1, 297, 301, 331, 333], [1, 288, 299, 301, 314], [1, 289, 297, 298, 313]
];

const firstX = 29.5;
const step = 9.29;

document.getElementById('candles').innerHTML = candles.map(([up, high, top, bottom, low], i) => {
    const x = firstX + i * step;
    return `<g class="${up ? 'up' : 'down'}">
        <rect x="${x - 0.5}" y="${high}" width="1" height="${low - high}" opacity=".65"/>
        <rect x="${x - 3.6}" y="${top}" width="7.2" height="${bottom - top}"/>
    </g>`;
}).join('');

// price labels, 10 points apart
let prices = '';
for (let p = 25180; p >= 24980; p -= 10) {
    prices += `<li>${p.toLocaleString('en-US')}.00</li>`;
}
document.getElementById('prices').innerHTML = prices;

// half hour labels from 05:30 AM to 02:00 PM
let times = '';
for (let m = 330; m <= 840; m += 30) {
    const h = Math.floor(m / 60);
    const hour = String(h > 12 ? h - 12 : h).padStart(2, '0');
    const min = String(m % 60).padStart(2, '0');
    times += `<li>${hour}:${min} ${h < 12 ? 'AM' : 'PM'}</li>`;
}
document.getElementById('times').innerHTML = times;
```
